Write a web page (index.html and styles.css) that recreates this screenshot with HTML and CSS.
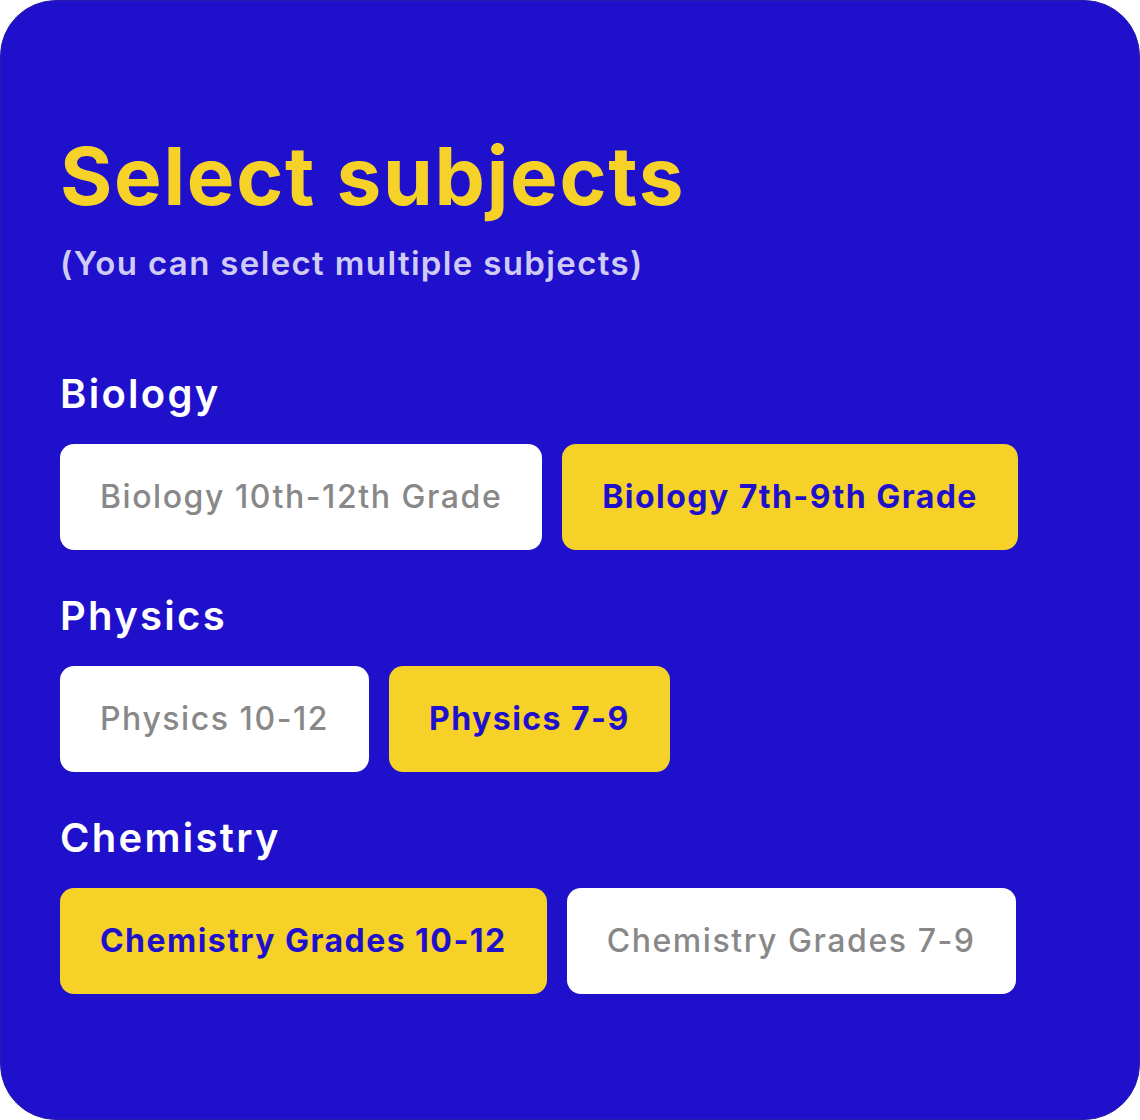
FILE: index.html
```html
<!DOCTYPE html>
<html lang="en">
<head>
<meta charset="utf-8">
<title>Select subjects</title>
<link rel="stylesheet" href="styles.css">
</head>
<body>
<main class="card">
  <h1 class="title">Select subjects</h1>
  <p class="subtitle">(You can select multiple subjects)</p>

  <section class="group">
    <h2 class="group-name">Biology</h2>
    <div class="options">
      <button class="chip">Biology 10th-12th Grade</button>
      <button class="chip chip-on">Biology 7th-9th Grade</button>
    </div>
  </section>

  <section class="group">
    <h2 class="group-name">Physics</h2>
    <div class="options">
      <button class="chip">Physics 10-12</button>
      <button class="chip chip-on">Physics 7-9</button>
    </div>
  </section>

  <section class="group">
    <h2 class="group-name">Chemistry</h2>
    <div class="options">
      <button class="chip chip-on">Chemistry Grades 10-12</button>
      <button class="chip">Chemistry Grades 7-9</button>
    </div>
  </section>
</main>
</body>
</html>
```

FILE: styles.css
```css
html, body {
  margin: 0;
  padding: 0;
  background: #ffffff;
}

body {
  font-family: Inter, "Noto Sans", sans-serif;
}

.card {
  box-sizing: border-box;
  width: 1140px;
  height: 1120px;
  background: #1f10cc;
  border: 1px solid #2a1aa6;
  border-radius: 56px;
  padding: 135px 59px 0 59px;
}

.title {
  margin: 0;
  font-size: 80px;
  line-height: 80px;
  font-weight: 700;
  color: #f6d127;
  letter-spacing: 1.7px;
}

.subtitle {
  margin: 27px 0 0 0;
  font-size: 33px;
  line-height: 40px;
  font-weight: 600;
  color: #cfcbf5;
  letter-spacing: 1.35px;
}

.group {
  margin-top: 42px;
}

.subtitle + .group {
  margin-top: 87px;
}

.group-name {
  margin: 0 0 26px 0;
  font-size: 40px;
  line-height: 48px;
  font-weight: 600;
  color: #ffffff;
  letter-spacing: 2.3px;
}

.options {
  display: flex;
  gap: 20px;
}

.chip {
  box-sizing: border-box;
  height: 106px;
  padding: 0 40px;
  border: none;
  border-radius: 14px;
  background: #ffffff;
  color: #888888;
  font-family: Inter, "Noto Sans", sans-serif;
  font-size: 32px;
  font-weight: 500;
  line-height: 40px;
  letter-spacing: 1.55px;
}

.chip-on {
  background: #f6d127;
  color: #1f10cc;
  font-weight: 700;
  letter-spacing: 1.45px;
}
```
